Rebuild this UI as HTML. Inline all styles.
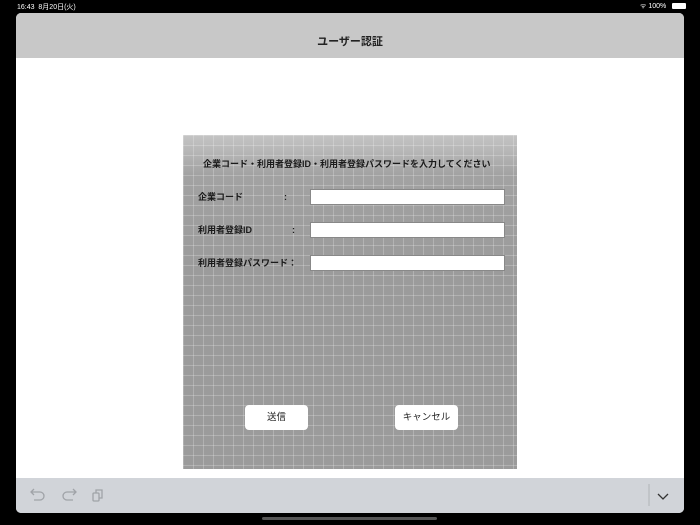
<!DOCTYPE html>
<html><head><meta charset="utf-8"><style>
*{margin:0;padding:0;box-sizing:border-box}
body{width:700px;height:525px;background:#000;position:relative;overflow:hidden;font-family:"Liberation Sans","Noto Sans CJK JP",sans-serif}
.sb{position:absolute;top:2px;color:#fff;font-size:7px}
.win{position:absolute;left:16px;top:13px;width:668px;height:500px;background:#fff;border-radius:5px;overflow:hidden}
.hdr{position:absolute;left:0;top:0;width:668px;height:45px;background:#c8c8c8;text-align:center;line-height:58px;font-size:11px;font-weight:bold;color:#222}
.panel{position:absolute;left:167px;top:122px;width:334px;height:334px;background-color:#9b9b9b;
background-image:linear-gradient(rgba(255,255,255,.22) 1px,transparent 1px),linear-gradient(90deg,rgba(255,255,255,.22) 1px,transparent 1px),linear-gradient(#c4c4c4,#a2a2a2 40px,#9b9b9b 130px);
background-size:10px 10px,10px 10px,100% 100%}
.t{position:absolute;font-size:9px;line-height:12px;font-weight:bold;color:#1a1a1a;white-space:nowrap}
.in{position:absolute;left:127px;width:195px;height:16px;background:#fff;border:1px solid #888}
.btn{position:absolute;top:270px;width:63px;height:25px;background:#fff;border-radius:4px;font-size:9.5px;text-align:center;line-height:25px;color:#222}
.tb{position:absolute;left:0;top:465px;width:668px;height:35px;background:#d1d4d9}
</style></head><body>
<div class="sb" style="left:17px">16:43&nbsp;&nbsp;8月20日(火)</div>
<div class="sb" style="left:640px">ᯤ 100%</div>
<div style="position:absolute;left:672px;top:3px;width:14px;height:6px;background:#fff;border-radius:1px"></div>
<div class="win">
<div class="hdr">ユーザー認証</div>
<div class="panel">
<div class="t" style="left:20px;top:23px">企業コード・利用者登録ID・利用者登録パスワードを入力してください</div>
<div class="t" style="left:15px;top:56px">企業コード</div><div class="t" style="left:101px;top:56px">:</div>
<div class="t" style="left:15px;top:89px">利用者登録ID</div><div class="t" style="left:109px;top:89px">:</div>
<div class="t" style="left:15px;top:122px">利用者登録パスワード：</div>
<div class="in" style="top:54px"></div>
<div class="in" style="top:87px"></div>
<div class="in" style="top:120px"></div>
<div class="btn" style="left:62px">送信</div>
<div class="btn" style="left:212px">キャンセル</div>
</div>
<div class="tb">
<svg width="668" height="35" style="position:absolute;left:0;top:0" fill="none" stroke="#a0a3a8" stroke-width="1.3">
<path d="M18 11 L15 14 L18 17 M15 14 H24 A4 4 0 0 1 24 22 H18"/>
<path d="M57 11 L60 14 L57 17 M60 14 H51 A4 4 0 0 0 51 22 H57"/>
<rect x="77" y="15" width="6" height="8" rx="1"/><path d="M80 15 V12 H86 V20 H83"/>
<path d="M633 6 V28" stroke="#b8bbc0"/>
<path d="M642 16 L647 21 L652 16" stroke="#333"/>
</svg>
</div>
</div>
<div style="position:absolute;left:262px;top:517px;width:175px;height:3px;background:#555;border-radius:2px"></div>
</body></html>
